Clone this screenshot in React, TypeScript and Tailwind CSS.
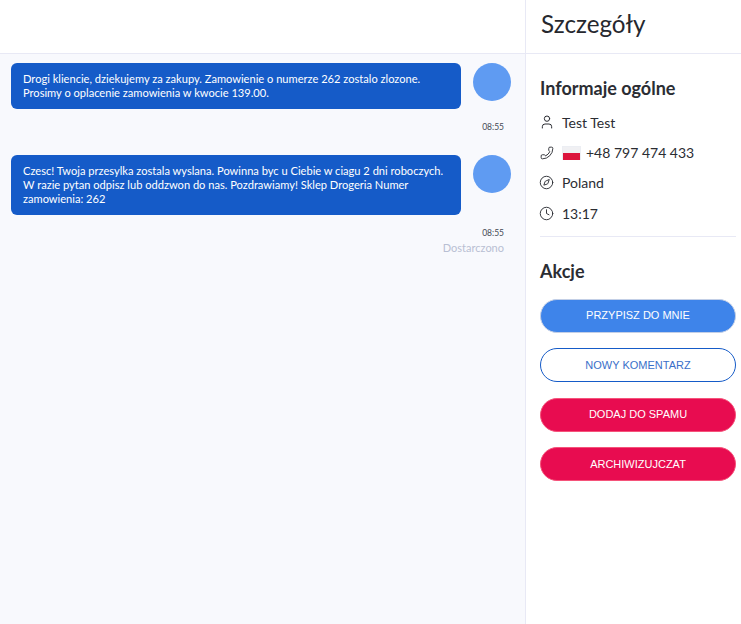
import { Clock, Compass, Phone, User } from "lucide-react";

const font = "font-['Lato','Noto_Sans',sans-serif]";

function Message({ lines, delivered }: { lines: string[]; delivered?: boolean }) {
  return (
    <div>
      <div className="flex items-start pl-[11px]">
        <div className="w-[450px] rounded-[6px] bg-[#155bc8] px-[12px] py-[9px] text-[11.1px] leading-[14px] text-white">
          {lines.map((line) => (
            <div key={line} className="whitespace-nowrap">
              {line}
            </div>
          ))}
        </div>
        <div className="ml-[12px] size-[38px] shrink-0 rounded-full bg-[#5f9bf2]" />
      </div>
      <div className="mt-[13px] pr-[21px] text-right text-[8.5px] leading-[11px] text-[#444a55]">08:55</div>
      {delivered ? (
        <div className="mt-[2px] pr-[21px] text-right text-[11px] leading-[14px] text-[#b9bfd3]">Dostarczono</div>
      ) : null}
    </div>
  );
}

function InfoRow({ icon, children }: { icon: React.ReactNode; children: React.ReactNode }) {
  return (
    <div className="flex h-[30.4px] items-center text-[14px] text-[#2b2d33]">
      <span className="flex w-[22px] shrink-0 items-center">{icon}</span>
      {children}
    </div>
  );
}

function ActionButton({ label, className }: { label: string; className: string }) {
  return (
    <button
      className={`flex h-[34px] w-[196px] items-center justify-center rounded-full border font-['Liberation_Sans',sans-serif] text-[11px] ${className}`}
    >
      {label}
    </button>
  );
}

export default function App() {
  return (
    <div className={`flex h-[624px] w-[741px] overflow-hidden bg-white ${font}`}>
      <div className="flex w-[525px] shrink-0 flex-col">
        <div className="h-[54px] shrink-0 border-b border-[#e8e9f5] bg-white" />
        <div className="flex flex-1 flex-col gap-[22px] bg-[#f8f9fd] pt-[9px]">
          <Message
            lines={[
              "Drogi kliencie, dziekujemy za zakupy. Zamowienie o numerze 262 zostalo zlozone.",
              "Prosimy o oplacenie zamowienia w kwocie 139.00.",
            ]}
          />
          <Message
            delivered
            lines={[
              "Czesc! Twoja przesylka zostala wyslana. Powinna byc u Ciebie w ciagu 2 dni roboczych.",
              "W razie pytan odpisz lub oddzwon do nas. Pozdrawiamy! Sklep Drogeria Numer",
              "zamowienia: 262",
            ]}
          />
        </div>
      </div>
      <div className="flex w-[216px] shrink-0 flex-col border-l border-[#e8e9f5]">
        <div className="flex h-[54px] shrink-0 items-center border-b border-[#e8e9f5] pb-[5px] pl-[15px] text-[24.2px] text-[#26282e]">
          Szczegóły
        </div>
        <div className="pl-[14px] pr-[5px] pt-[23px]">
          <div className="mb-[8px] text-[18px] font-bold leading-[22px] text-[#2b2d33]">Informaje ogólne</div>
          <InfoRow icon={<User size={16} strokeWidth={1.5} className="-ml-[1px]" />}>Test Test</InfoRow>
          <InfoRow icon={<Phone size={14} strokeWidth={1.6} className="-scale-x-100" />}>
            <span className="mr-[5px] flex h-[14px] w-[19px] flex-col overflow-hidden border border-b-0 border-[#eceef3]">
              <span className="flex-1 bg-[#f0f0f3]" />
              <span className="flex-1 bg-[#dc143c]" />
            </span>
            +48 797 474 433
          </InfoRow>
          <InfoRow icon={<Compass size={15} strokeWidth={1.5} className="-ml-[1px]" />}>Poland</InfoRow>
          <InfoRow icon={<Clock size={15} strokeWidth={1.5} className="-ml-[1px]" />}>13:17</InfoRow>
          <div className="mt-[7px] border-t border-[#e8e9f5]" />
          <div className="mb-[17px] mt-[23px] text-[18px] font-bold leading-[22px] text-[#2b2d33]">Akcje</div>
          <div className="flex flex-col gap-[15.5px]">
            <ActionButton label="PRZYPISZ DO MNIE" className="border-[#c3cfe6] bg-[#3e84ea] text-white" />
            <ActionButton label="NOWY KOMENTARZ" className="border-[#155bc8] bg-white text-[#3a6fc9]" />
            <ActionButton label="DODAJ DO SPAMU" className="border-[#f5537a] bg-[#e80c50] text-white" />
            <ActionButton label="ARCHIWIZUJCZAT" className="border-[#f5537a] bg-[#e80c50] text-white" />
          </div>
        </div>
      </div>
    </div>
  );
}
